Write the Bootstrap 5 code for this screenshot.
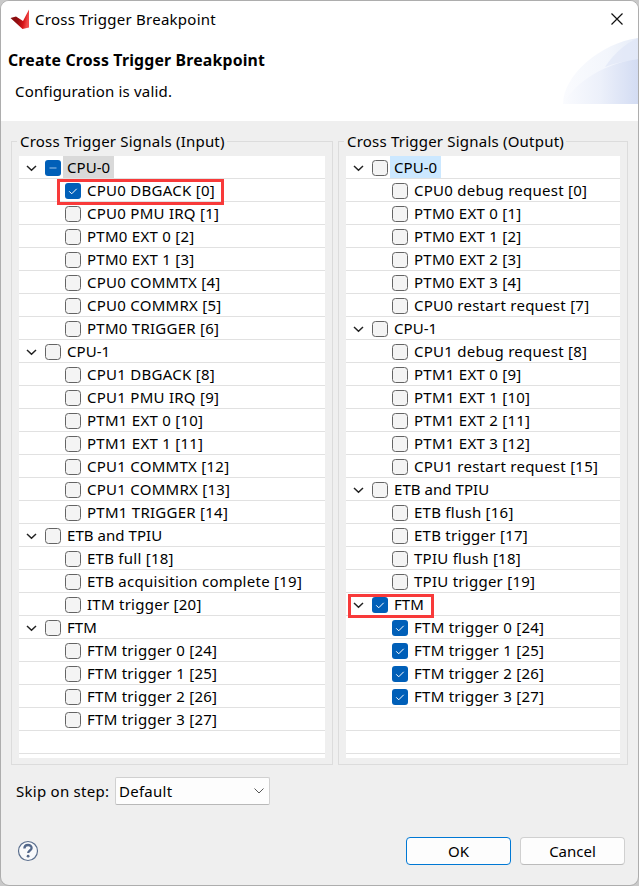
<!DOCTYPE html>
<html lang="en">
<head>
<meta charset="utf-8">
<meta name="viewport" content="width=device-width, initial-scale=1">
<title>Cross Trigger Breakpoint</title>
<link href="https://cdn.jsdelivr.net/npm/bootstrap@5.3.0/dist/css/bootstrap.min.css" rel="stylesheet">
<style>
body{background:#c9c9c9;font:15px/22px "Noto Sans","Open Sans",sans-serif;letter-spacing:.26px;color:#000;overflow:hidden}
.dialog{width:639px;height:886px;background:#efefef;border:1px solid #adadad;border-radius:9px;overflow:hidden}
.dlg-head{height:120px;background:#fff}
.titlebar{height:36px;padding-left:9px;padding-right:14px}
.t-title{padding-left:1px}
.wing{right:0;top:37px}
.head-title{padding:12px 0 0 7px;line-height:22px;font-size:15.8px;letter-spacing:.19px}
.head-msg{padding:10px 0 0 14px;line-height:20px;letter-spacing:.17px}
.panes{padding:9px 10px 0 10px;gap:5px}
.group{height:635px;position:relative}
.group-frame{inset:11px 0 0 0;border:1px solid #dcdcdc}
.g-in{width:322px}.g-out{width:290px}
.caption{height:22px;line-height:22px;margin-left:6px;padding:0 2px 0 3px;background:#efefef;align-self:flex-start;position:relative;letter-spacing:.21px}
.tree{height:602px;margin:4px 8px 0 8px;background:#fff;overflow:hidden;position:relative}
.item{height:23px;border-bottom:1px solid #e1e1e1;padding-left:7px}
.item.child{padding-left:46px}
.item svg{flex:none;margin-top:2px}
.arrow{margin-right:8px}
.lbl{padding:0 4px;margin-left:2px;height:22px;line-height:22px;white-space:nowrap}
.item:not(.child) .lbl{letter-spacing:.05px}
.sel-gray{background:#d9d9d9}.sel-blue{background:#cce8ff}
.callout{border:3px solid #f83a3a;position:absolute}
.c1{left:57px;top:179px;width:167px;height:26px}
.c2{left:348px;top:594px;width:86px;height:24px}
.skip{padding:12px 0 0 15px;height:39px}
.combo{width:155px;height:28px;flex:none;border:1px solid #d0d0d0;border-bottom-color:#b8b8b8;border-radius:2px;background:#fdfdfd;padding:0 4px 0 3px;margin-left:5px}
.skip-label{width:94px}
.foot{margin-top:33px;padding:0 13px 0 16px}
.dbtn{width:105px;height:28px;padding:0;border:1px solid #d0d0d0;border-bottom-color:#bbb;border-radius:4px;background:#fdfdfd;font-size:15px;line-height:26px;color:#000}
.dbtn.main{border-color:#0078d4;margin-right:9px}
</style>
</head>
<body>
<svg width="0" height="0" class="position-absolute" aria-hidden="true">
<defs>
<linearGradient id="wg"><stop stop-color="#fafbfe"/><stop offset=".5" stop-color="#ecf0fa"/><stop offset="1" stop-color="#d3dcf3"/></linearGradient>
<linearGradient id="wl"><stop stop-color="#fafbfe"/><stop offset=".6" stop-color="#f3f6fc"/><stop offset="1" stop-color="#e6ecf8"/></linearGradient>
<linearGradient id="red" x1="0" y1="0" x2="1" y2=".2"><stop stop-color="#7c1010"/><stop offset=".5" stop-color="#950d10"/><stop offset=".8" stop-color="#d81518"/><stop offset="1" stop-color="#f04a4a"/></linearGradient>
<symbol id="off" viewBox="0 0 16 16"><rect x=".5" y=".5" width="15" height="15" rx="3" fill="#f4f4f4" stroke="#646464"/></symbol>
<symbol id="on" viewBox="0 0 16 16"><rect width="16" height="16" rx="3" fill="#005fb8"/><path d="M4.200 8.300l2.500 2.500 5-5" fill="none" stroke="#fff" stroke-width="1"/></symbol>
<symbol id="mix" viewBox="0 0 16 16"><rect width="16" height="16" rx="3" fill="#005fb8"/><path d="M4.500 8h7" stroke="#9cc4e8" stroke-width="1"/></symbol>
<symbol id="arr" viewBox="0 0 11 16"><path d="M1 6l4.500 4.200L10 6" fill="none" stroke="#222" stroke-width="1.500"/></symbol>
</defs></svg>
<main class="dialog position-relative">
<header class="dlg-head position-relative">
<svg class="wing position-absolute" width="75" height="66" viewBox="0 0 75 66"><path d="M0 66C0 37 38 5 75 0V66Z" fill="url(#wl)"/><path d="M42 29C51 16 61 6 75 0V21C63 23 52 25 42 29Z" fill="#dde5f6" opacity=".6"/><path d="M0 66C8 50 35 26 75 21V66Z" fill="url(#wg)"/></svg>
<div class="titlebar d-flex align-items-center">
<svg width="20" height="20" viewBox="0 0 20 20"><path d="M.5 9L6 7.500L13 12L19 .5V18.500L12.500 20Z" fill="url(#red)"/></svg>
<span class="t-title ms-1 me-auto">Cross Trigger Breakpoint</span>
<svg width="14" height="14" viewBox="0 0 14 14"><path d="M1.500 1.500l11 11M12.500 1.500l-11 11" stroke="#111" stroke-width="1.200"/></svg>
</div>
<div class="head-title fw-bold">Create Cross Trigger Breakpoint</div>
<div class="head-msg">Configuration is valid.</div>
</header>
<section class="panes d-flex">
<div class="group g-in d-flex flex-column"><div class="group-frame position-absolute"></div><div class="caption">Cross Trigger Signals (Input)</div><div class="tree" id="inTree"></div></div>
<div class="group g-out d-flex flex-column"><div class="group-frame position-absolute"></div><div class="caption">Cross Trigger Signals (Output)</div><div class="tree" id="outTree"></div></div>
</section>
<div class="skip d-flex align-items-center"><span class="skip-label text-nowrap">Skip on step:</span>
<div class="combo d-flex align-items-center justify-content-between"><span>Default</span><svg width="12" height="8" viewBox="0 0 12 8"><path d="M1.500 1.500L6 6l4.500-4.500" fill="none" stroke="#555"/></svg></div></div>
<footer class="foot d-flex align-items-center">
<svg class="me-auto" width="22" height="22" viewBox="0 0 22 22"><circle cx="11" cy="11" r="9.500" fill="#f8f9fb" stroke="#5b6f8e" stroke-width="1.200"/><path d="M7.400 8.500C7.400 3.800 14.600 4 14.600 8C14.600 10.500 11.200 10.500 11.200 13" fill="none" stroke="#52678a" stroke-width="2.300"/><circle cx="11.100" cy="16.200" r="1.400" fill="#52678a"/></svg>
<button class="btn dbtn main" type="button">OK</button><button class="btn dbtn" type="button">Cancel</button>
</footer>
</main>
<div class="callout c1"></div><div class="callout c2"></div>
<script>
// "+" marks a parent row; a third field selects the row highlight.
const inputs = [["+CPU-0","mix","sel-gray"],["CPU0 DBGACK [0]","on"],["CPU0 PMU IRQ [1]"],["PTM0 EXT 0 [2]"],["PTM0 EXT 1 [3]"],["CPU0 COMMTX [4]"],["CPU0 COMMRX [5]"],["PTM0 TRIGGER [6]"],["+CPU-1"],["CPU1 DBGACK [8]"],["CPU1 PMU IRQ [9]"],["PTM1 EXT 0 [10]"],["PTM1 EXT 1 [11]"],["CPU1 COMMTX [12]"],["CPU1 COMMRX [13]"],["PTM1 TRIGGER [14]"],["+ETB and TPIU"],["ETB full [18]"],["ETB acquisition complete [19]"],["ITM trigger [20]"],["+FTM"],["FTM trigger 0 [24]"],["FTM trigger 1 [25]"],["FTM trigger 2 [26]"],["FTM trigger 3 [27]"]];
const outputs = [["+CPU-0","off","sel-blue"],["CPU0 debug request [0]"],["PTM0 EXT 0 [1]"],["PTM0 EXT 1 [2]"],["PTM0 EXT 2 [3]"],["PTM0 EXT 3 [4]"],["CPU0 restart request [7]"],["+CPU-1"],["CPU1 debug request [8]"],["PTM1 EXT 0 [9]"],["PTM1 EXT 1 [10]"],["PTM1 EXT 2 [11]"],["PTM1 EXT 3 [12]"],["CPU1 restart request [15]"],["+ETB and TPIU"],["ETB flush [16]"],["ETB trigger [17]"],["TPIU flush [18]"],["TPIU trigger [19]"],["+FTM","on"],["FTM trigger 0 [24]","on"],["FTM trigger 1 [25]","on"],["FTM trigger 2 [26]","on"],["FTM trigger 3 [27]","on"]];
function fill(id, rows){
  let html = "";
  for (let i = 0; i < 26; i++){
    const r = rows[i];
    if (!r){ html += '<div class="item"></div>'; continue; }
    const parent = r[0][0] === "+";
    html += `<div class="item d-flex align-items-center ${parent ? "" : "child"}">${parent ? '<svg class="arrow" width="11" height="16"><use href="#arr"/></svg>' : ""}<svg width="16" height="16"><use href="#${r[1] || "off"}"/></svg><span class="lbl ${r[2] || ""}">${r[0].replace("+", "")}</span></div>`;
  }
  document.getElementById(id).innerHTML = html;
}
fill("inTree", inputs);
fill("outTree", outputs);
</script>
<script src="https://cdn.jsdelivr.net/npm/bootstrap@5.3.0/dist/js/bootstrap.bundle.min.js"></script>
</body>
</html>
